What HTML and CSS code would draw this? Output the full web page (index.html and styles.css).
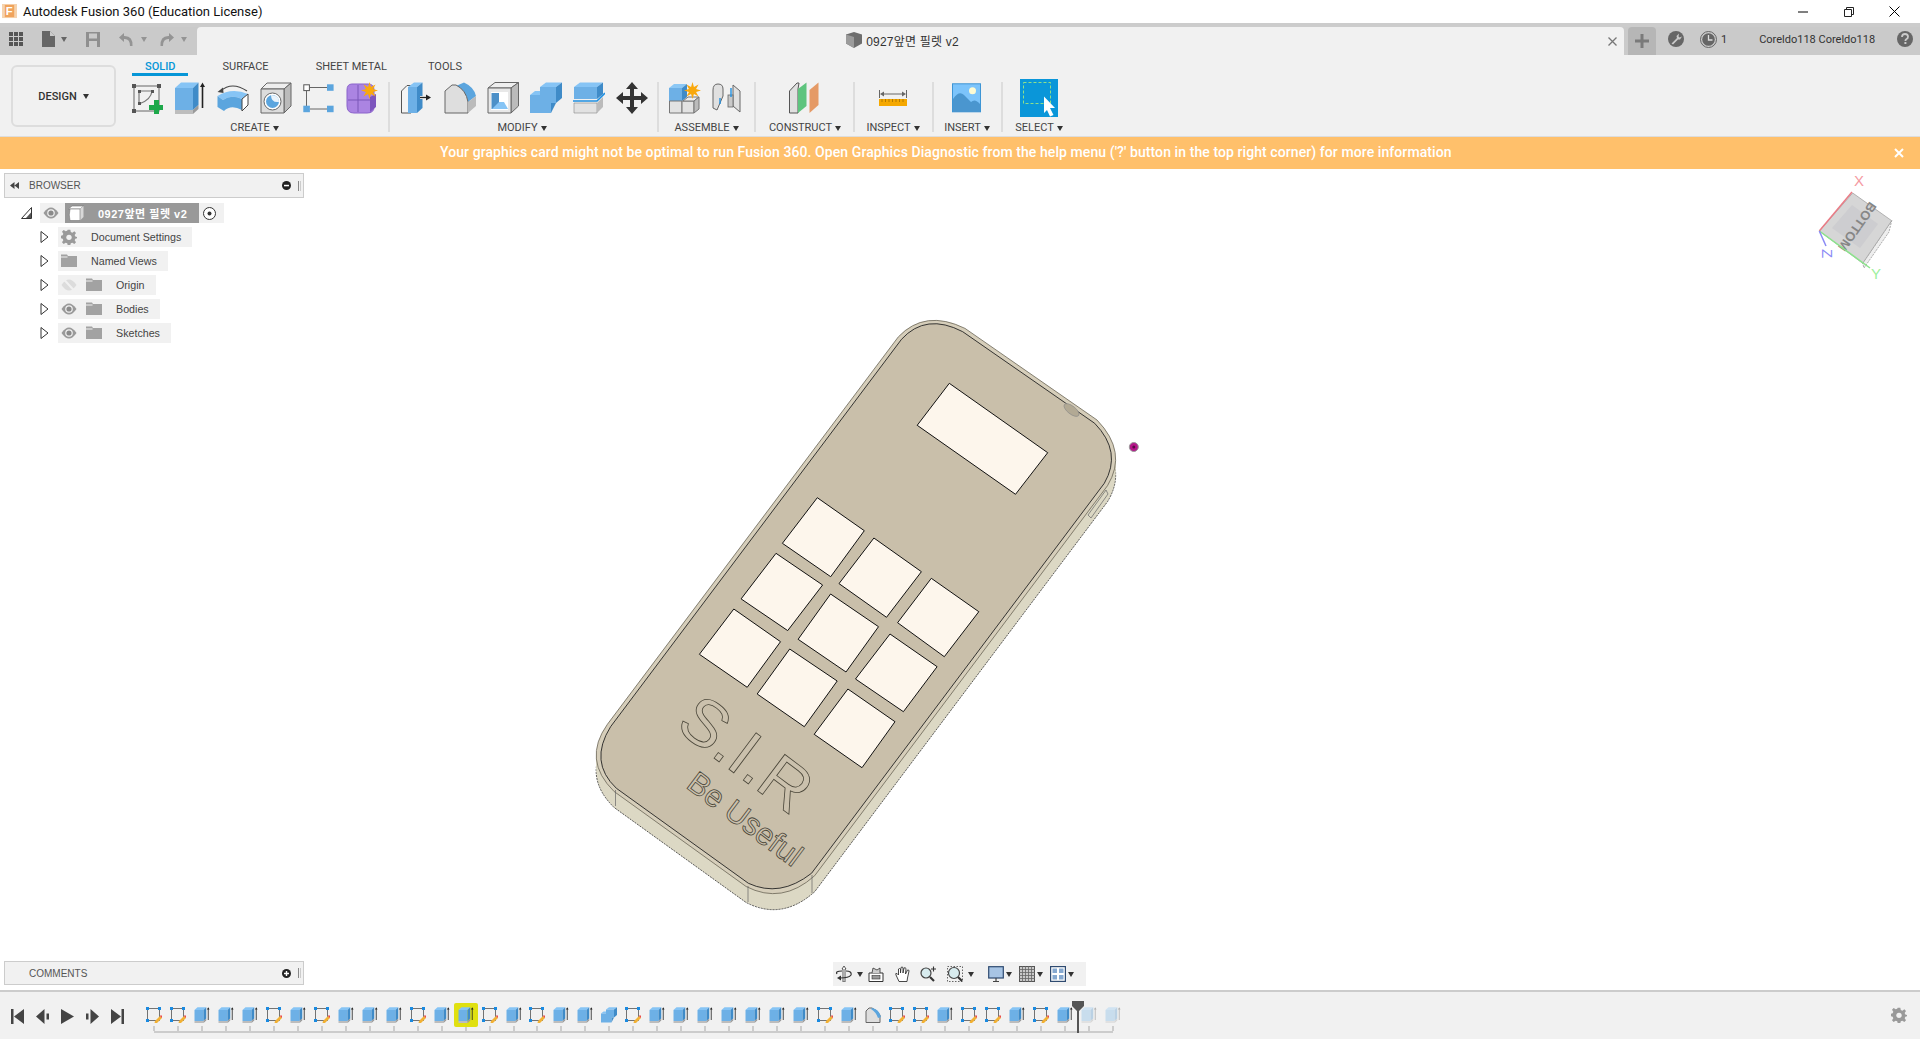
FILE: index.html
```html
<!DOCTYPE html>
<html lang="en">
<head>
<meta charset="utf-8">
<title>Autodesk Fusion 360 (Education License)</title>
<link rel="stylesheet" href="styles.css">
</head>
<body>
<svg class="defs" width="0" height="0" aria-hidden="true">
  <defs>
    <polygon id="star" points="0,-10 1.7,-4.2 7.1,-7.1 4.2,-1.7 10,0 4.2,1.7 7.1,7.1 1.7,4.2 0,10 -1.7,4.2 -7.1,7.1 -4.2,1.7 -10,0 -4.2,-1.7 -7.1,-7.1 -1.7,-4.2" fill="#f9a80c"/>
    <symbol id="i-sketch" viewBox="0 0 32 32">
      <rect x="3" y="4" width="25" height="25" fill="none" stroke="#666" stroke-width="1"/>
      <rect x="1" y="2" width="4" height="4" fill="#555"/><rect x="26" y="2" width="4" height="4" fill="#555"/><rect x="1" y="27" width="4" height="4" fill="#555"/>
      <path d="M8 9 H21 M8 9 V22 M21 9 Q20 18 8 22" fill="none" stroke="#777" stroke-width="1.2"/>
      <rect x="7" y="8" width="3" height="3" fill="#555"/><rect x="7" y="20" width="3" height="3" fill="#555"/><rect x="20" y="8" width="3" height="3" fill="#555"/>
      <path d="M23 18 H28 V23 H32 V28 H28 V32 H23 V28 H18 V23 H23Z" fill="#1da84a"/>
    </symbol>
    <symbol id="i-extrude" viewBox="0 0 32 32">
      <path d="M1 6 L7 .5 H24.5 L19 6Z" fill="#86c4f5"/>
      <path d="M1 6 H19 V28 H1Z" fill="#6db0e6"/>
      <path d="M19 6 L24.5 .5 V23 L19 28Z" fill="#3f8bc8"/>
      <path d="M1 28 H19 V32 H1Z" fill="#bdbdbd"/>
      <path d="M19 28 L24.5 23 V27 L19 32Z" fill="#9a9a9a"/>
      <path d="M28.5 26 V3" stroke="#222" stroke-width="1.6"/>
      <path d="M28.5 .5 L31 5 H26Z" fill="#222"/>
    </symbol>
    <symbol id="i-revolve" viewBox="0 0 32 32">
      <path d="M3.5 9 Q15 -1 30 9" fill="none" stroke="#444" stroke-width="1.2"/>
      <path d="M.5 10 L6 5.5 L6.5 11Z" fill="#444"/>
      <path d="M.5 14 Q15 5 31 12 L25 17 Q14 12 6 18Z" fill="#86c4f5"/>
      <path d="M.5 14 L6 18 Q14 12 25 17 V28 Q14 22 7 29 L.5 25Z" fill="#5ba5de"/>
      <path d="M25 17 L31 12 V23 L25 29Z" fill="#fff" stroke="#444"/>
    </symbol>
    <symbol id="i-hole" viewBox="0 0 32 32">
      <path d="M1 7 L7 1 H31 L24 7Z" fill="#eee" stroke="#666"/>
      <path d="M24 7 L31 1 V24 L24 31Z" fill="#bbb" stroke="#666"/>
      <path d="M1 7 H24 V31 H1Z" fill="#dcdcdc" stroke="#666"/>
      <circle cx="12.5" cy="19.5" r="8.5" fill="#fff" stroke="#666"/>
      <circle cx="12.5" cy="19.5" r="6.5" fill="#5ba5de"/>
      <path d="M11 13 Q11 21 19 20 Q19 13 11 13Z" fill="#eaf4fc"/>
    </symbol>
    <symbol id="i-pattern" viewBox="0 0 32 32">
      <path d="M7 5.5 H24 M3.5 9 V24 M7 27 H24" stroke="#666" stroke-width="1"/>
      <rect x=".8" y="2.8" width="5.6" height="5.8" fill="#fff" stroke="#555"/>
      <rect x="24" y="2.3" width="6.6" height="6.5" fill="#5ba5de"/>
      <rect x=".3" y="23.7" width="6.6" height="6.5" fill="#5ba5de"/>
      <rect x="24" y="23.7" width="6.6" height="6.5" fill="#5ba5de"/>
    </symbol>
    <symbol id="i-form" viewBox="0 0 32 32">
      <path d="M6 2 H22 Q28 2 28 8 V25 Q28 31 21 31 H8 Q1 31 1 24 V8 Q1 2 6 2Z" fill="#ab84e2" stroke="#8a62cb"/>
      <path d="M12 3 V30 M2 18 H27" stroke="#7a57b8" stroke-width="1"/>
      <path d="M24 15 L30 12 V25 L24 30Z" fill="#7d55bd"/>
      <use href="#star" transform="translate(23.5 8.5) scale(.85)"/>
    </symbol>
    <symbol id="i-press" viewBox="0 0 32 32">
      <path d="M.5 9 L6 3.5 H10 V31 H.5Z" fill="#f4f4f4" stroke="#555"/>
      <path d="M7 5 L13 .5 H21.5 L16 5Z" fill="#86c4f5"/>
      <path d="M7 5 H16 V31 H7Z" fill="#6db0e6"/>
      <path d="M16 5 L21.5 .5 V26 L16 31Z" fill="#3f8bc8"/>
      <path d="M19 15.5 H26" stroke="#fff" stroke-width="3"/>
      <path d="M19 15.5 H26" stroke="#222" stroke-width="1.4"/>
      <path d="M30 15.5 L25 12.5 V18.5Z" fill="#222"/>
    </symbol>
    <symbol id="i-fillet" viewBox="0 0 32 32">
      <path d="M12 4 L20 .5 Q30 5 32 14 L24 20 Q22 8 12 4Z" fill="#5ba5de"/>
      <path d="M1 31 V9 L8 3 H12 Q22 8 24 20 V31Z" fill="#dedede" stroke="#666"/>
      <path d="M24 20 L32 14 V24 L24 31Z" fill="#bbb"/>
    </symbol>
    <symbol id="i-shell" viewBox="0 0 32 32">
      <path d="M1 6 L8 .5 H31.5 L24 6Z" fill="#efefef" stroke="#666"/>
      <path d="M24 6 L31.5 .5 V24 L24 31Z" fill="#bbb" stroke="#666"/>
      <path d="M1 6 H24 V31 H1Z" fill="#e8e8e8" stroke="#666"/>
      <rect x="4" y="10" width="17" height="18" fill="#fff"/>
      <rect x="4.5" y="11" width="7.5" height="16" fill="#4c90c8"/>
      <path d="M12 20 H17 L21 27 H5Z" fill="#86c4f5"/>
    </symbol>
    <symbol id="i-combine" viewBox="0 0 32 32">
      <path d="M10 5 L16 .5 H32 L26 5Z" fill="#86c4f5"/>
      <path d="M10 5 H26 V21 H10Z" fill="#6db0e6"/>
      <path d="M26 5 L32 .5 V16 L26 21Z" fill="#3f8bc8"/>
      <path d="M0 13 L5 9 H10 V13Z" fill="#86c4f5"/>
      <path d="M0 13 H21 V31 H0Z" fill="#6db0e6"/>
      <path d="M21 21 H26 L21 31Z" fill="#3f8bc8"/>
    </symbol>
    <symbol id="i-offset" viewBox="0 0 32 32">
      <path d="M1 5 L7 .5 H30 L24 5Z" fill="#86c4f5"/>
      <path d="M1 5 H24 V17 H1Z" fill="#6db0e6"/>
      <path d="M24 5 L30 .5 V12 L24 17Z" fill="#3f8bc8"/>
      <path d="M-1 19 H24 L32 11" fill="none" stroke="#1f8fe0" stroke-width="1.6"/>
      <path d="M1 21 H24 V31 H1Z" fill="#e2e2e2" stroke="#888" stroke-width=".6"/>
      <path d="M24 21 L30 15 V25 L24 31Z" fill="#bbb"/>
    </symbol>
    <symbol id="i-move" viewBox="0 0 32 32">
      <path d="M16 0 L22 7 H18 V14 H25 V10 L32 16 L25 22 V18 H18 V25 H22 L16 32 L10 25 H14 V18 H7 V22 L0 16 L7 10 V14 H14 V7 H10Z" fill="#333"/>
    </symbol>
    <symbol id="i-newcomp" viewBox="0 0 32 32">
      <path d="M0 6 L5 2 H18 L13 6Z" fill="#8cc8f5"/>
      <path d="M0 6 H13 V19 H0Z" fill="#6db0e6"/>
      <path d="M13 6 L18 2 V15 L13 19Z" fill="#3f8bc8"/>
      <path d="M.5 19 H13 V31 H.5Z" fill="#e2e2e2" stroke="#777"/>
      <path d="M13 19 H25 V31 H13Z" fill="#e2e2e2" stroke="#777"/>
      <path d="M14 19 L19 15 H30 L25 19Z" fill="#eee" stroke="#777"/>
      <path d="M25 19 L30 15 V27 L25 31Z" fill="#bbb" stroke="#777"/>
      <use href="#star" transform="translate(23.5 8.5) scale(.85)"/>
    </symbol>
    <symbol id="i-joint" viewBox="0 0 32 32">
      <path d="M1 8 Q1 2 6 2 Q11 2 11 7 V14 L5 28 L1 26Z" fill="#e0e0e0" stroke="#666"/>
      <path d="M21 3 L28 9 V30 L21 24Z" fill="#e0e0e0" stroke="#666"/>
      <rect x="16" y="13" width="5" height="12" fill="#c9c9c9" stroke="#666" stroke-width=".8"/>
      <path d="M19 6 V15" stroke="#1f8fe0" stroke-width="1.4"/>
      <path d="M8 16 V22" stroke="#1f8fe0" stroke-width="1.4"/>
    </symbol>
    <symbol id="i-construct" viewBox="0 0 32 32">
      <path d="M.5 9 L8 1 H10 L9 7 V31 H.5Z" fill="#e0e0e0" stroke="#555"/>
      <path d="M9 7 L17.5 .5 V24 L9 31Z" fill="#5ec47e"/>
      <path d="M20.5 31 V8 L29.5 .5 V23Z" fill="#e59a66"/>
    </symbol>
    <symbol id="i-inspect" viewBox="0 0 32 32">
      <path d="M2.5 8 V16 M29.5 8 V16" stroke="#666" stroke-width="1"/>
      <path d="M6 12 H26" stroke="#666" stroke-width="1"/>
      <path d="M3 12 L7 9.5 V14.5Z M29 12 L25 9.5 V14.5Z" fill="#666"/>
      <rect x="2" y="17" width="28" height="7" fill="#f5a800"/>
      <path d="M5 17 V20 M8.500 17 V20 M12 17 V20 M15.500 17 V20 M19 17 V20 M22.500 17 V20 M26 17 V20" stroke="#a36f00" stroke-width=".8"/>
    </symbol>
    <symbol id="i-insert" viewBox="0 0 32 32">
      <rect x="1.500" y="1.800" width="28" height="28" fill="#7cc4fb" stroke="#3d95d5"/>
      <path d="M2 30 V17 Q8 8 13 13 Q17 17 20 20 Q24 16 29 22 V30Z" fill="#4a96cf"/>
      <circle cx="21.500" cy="8.700" r="3.500" fill="#fdfbd4"/>
    </symbol>
    <symbol id="i-select" viewBox="0 0 38 38">
      <rect width="38" height="38" fill="#0a96d9"/>
      <rect x="3.500" y="3.500" width="27" height="21" fill="none" stroke="#8fe08a" stroke-dasharray="3 2"/>
      <path d="M24 17.500 L35 29 H30 L33.500 36 L30 37.500 L27 31 L24 34Z" fill="#fff"/>
    </symbol>
    <symbol id="i-tlsketch" viewBox="0 0 16 16">
      <rect x="1.500" y="1.500" width="12" height="12" fill="none" stroke="#666" stroke-width=".9"/>
      <path d="M0 0 H3 V3 H0Z M12 0 H15 V3 H12Z M0 12 H3 V15 H0Z" fill="#1a8ae0"/>
      <path d="M9 14 L14 9 L16 11 L11 16 L8.500 16Z" fill="#f2b134"/>
      <path d="M14 9 L15 8 L16.500 9.500 L15.500 11Z" fill="#ea4b4b"/>
    </symbol>
    <symbol id="i-tlfillet" viewBox="0 0 16 16">
      <path d="M1 15.500 V4 L4 1 H7 Q12 3 15 8 V15.500Z" fill="#dedede" stroke="#666"/>
      <path d="M7 1 Q14 2 16 10 L13 11 Q11 5 6 2Z" fill="#5ba5de"/>
    </symbol>
    <symbol id="i-gear" viewBox="0 0 24 24">
      <path d="M10 1 H14 L14.700 4.500 L17 5.500 L20 3.500 L22.500 6 L20.500 9 L21.500 11.300 L24 12 V14 L21.500 14.700 L20.500 17 L22.500 20 L20 22.500 L17 20.500 L14.700 21.500 L14 24 H10 L9.300 21.500 L7 20.500 L4 22.500 L1.500 20 L3.500 17 L2.500 14.700 L0 14 V10 L2.500 9.300 L3.500 7 L1.500 4 L4 1.500 L7 3.500 L9.300 2.500Z" fill="currentColor"/>
      <circle cx="12" cy="12.500" r="4" fill="#f1f1f1"/>
    </symbol>
    <symbol id="i-eye" viewBox="0 0 16 16">
      <path d="M.5 8 Q8 -3 15.500 8 Q8 19 .5 8Z" fill="#9a9a9a"/>
      <circle cx="8" cy="8" r="3.800" fill="#f1f1f1"/>
      <circle cx="8" cy="8" r="2.600" fill="#8a8a8a"/>
    </symbol>
    <symbol id="i-folder" viewBox="0 0 16 16">
      <path d="M0 1.500 H6 L7 3 H16 V14 H0Z" fill="#a2a2a2"/>
      <path d="M0 3.500 H6.500 V4.500 H0Z" fill="#f1f1f1"/>
    </symbol>
    <symbol id="i-arrow" viewBox="0 0 9 12">
      <path d="M1 .5 L8 6 L1 11.500Z" fill="#fff" stroke="#333" stroke-width="1"/>
    </symbol>
  </defs>
</svg>

<header class="titlebar">
  <svg class="app-icon" viewBox="0 0 16 16"><rect width="16" height="15" fill="#f6d3ae"/><rect x="3" y="1" width="10" height="13" fill="#f0a35c"/><text x="4" y="12" class="app-f">F</text></svg>
  <span class="app-title">Autodesk Fusion 360 (Education License)</span>
  <div class="win-controls">
    <svg class="win-min" viewBox="0 0 10 10"><path d="M0 5 H10" stroke="#000" stroke-width="1"/></svg>
    <svg class="win-max" viewBox="0 0 10 10"><path d="M.5 2.500 H7.500 V9.500 H.5Z M2.500 2.500 V.5 H9.500 V7.500 H7.500" fill="none" stroke="#222"/></svg>
    <svg class="win-close" viewBox="0 0 11 11"><path d="M.5 .5 L10.500 10.500 M10.500 .5 L.5 10.500" stroke="#000"/></svg>
  </div>
</header>
<div class="strip"></div>

<div class="tabrow">
  <div class="quick">
    <svg class="q-grid" viewBox="0 0 14 14"><path d="M0 0h4v4H0zM5 0h4v4H5zM10 0h4v4h-4zM0 5h4v4H0zM5 5h4v4H5zM10 5h4v4h-4zM0 10h4v4H0zM5 10h4v4H5zM10 10h4v4h-4z" fill="#555"/></svg>
    <svg class="q-file" viewBox="0 0 13 16"><path d="M0 0 H8 L13 5 V16 H0Z" fill="#666"/><path d="M8 0 V5 H13Z" fill="#ccc"/></svg>
    <span class="caret q-c1"></span>
    <svg class="q-save" viewBox="0 0 14 15"><path d="M0 0 H14 V15 H0Z" fill="#8f8f8f"/><rect x="3" y="1.500" width="8" height="5" fill="#cacaca"/><rect x="3" y="9" width="8" height="6" fill="#cacaca"/></svg>
    <svg class="q-undo" viewBox="0 0 14 14"><path d="M5 1 L0 5.500 L5 10 V7 Q11 6.500 11 14 H13.500 Q14 3.500 5 4Z" fill="#949494"/></svg>
    <span class="caret caret-light q-c2"></span>
    <svg class="q-redo" viewBox="0 0 14 14"><path d="M9 1 L14 5.500 L9 10 V7 Q3 6.500 3 14 H.5 Q0 3.500 9 4Z" fill="#949494"/></svg>
    <span class="caret caret-light q-c3"></span>
  </div>
  <div class="doc-tab">
    <div class="doc-title">
      <svg class="doc-cube" viewBox="0 0 16 16"><path d="M8 0 L16 2.500 V11.500 L8 16 L0 11.500 V2.500Z" fill="#6e6e6e"/><path d="M0 2.500 L8 5 V16 L0 11.500Z" fill="#9b9b9b"/></svg>
      <span>0927앞면 필렛 v2</span>
    </div>
    <svg class="doc-close" viewBox="0 0 9 9"><path d="M.5 .5 L8.500 8.500 M8.500 .5 L.5 8.500" stroke="#777" stroke-width="1.300"/></svg>
  </div>
  <div class="account">
    <div class="new-tab"><svg viewBox="0 0 14 14"><path d="M5.500 0 H8.500 V5.500 H14 V8.500 H8.500 V14 H5.500 V8.500 H0 V5.500 H5.500Z" fill="#7a7a7a"/></svg></div>
    <svg class="ac-wrench" viewBox="0 0 16 16"><circle cx="8" cy="8" r="8" fill="#666"/><path d="M11 2.500 L8.500 5 L9 7 L3.500 12.500 L5 13.500 L10 8.500 L12 8.500 L14 5.500 L11.500 6.500 L10.500 5.500Z" fill="#cacaca"/></svg>
    <svg class="ac-clock" viewBox="0 0 17 17"><circle cx="8.500" cy="8.500" r="8" fill="#cacaca" stroke="#666"/><circle cx="8.500" cy="8.500" r="6.300" fill="#666"/><path d="M8.500 4 V9 H12.500" fill="none" stroke="#ddd" stroke-width="1.300"/></svg>
    <span class="ac-count">1</span>
    <span class="ac-user">Coreldo118 Coreldo118</span>
    <svg class="ac-help" viewBox="0 0 16 16"><circle cx="8" cy="8" r="8" fill="#666"/><path d="M5 6 Q5 3 8 3 Q11 3 11 5.700 Q11 7.300 9.300 8.200 Q8.400 8.800 8.400 10" fill="none" stroke="#cacaca" stroke-width="1.800"/><rect x="7.400" y="11" width="2" height="2" fill="#cacaca"/></svg>
  </div>
</div>

<div class="toolbar">
  <button class="design">DESIGN<span class="caret caret-dark"></span></button>
  <div class="tools">
    <nav class="tabs">
      <span class="tab tab-active">SOLID</span>
      <span class="tab">SURFACE</span>
      <span class="tab">SHEET METAL</span>
      <span class="tab tab-last">TOOLS</span>
    </nav>
    <div class="groups">
      <section class="group g-create">
        <div class="icons"><svg class="ti"><use href="#i-sketch"/></svg><svg class="ti"><use href="#i-extrude"/></svg><svg class="ti"><use href="#i-revolve"/></svg><svg class="ti"><use href="#i-hole"/></svg><svg class="ti"><use href="#i-pattern"/></svg><svg class="ti"><use href="#i-form"/></svg></div>
        <div class="label">CREATE<span class="caret caret-dark"></span></div>
      </section>
      <div class="sep"></div>
      <section class="group g-modify">
        <div class="icons"><svg class="ti"><use href="#i-press"/></svg><svg class="ti"><use href="#i-fillet"/></svg><svg class="ti"><use href="#i-shell"/></svg><svg class="ti"><use href="#i-combine"/></svg><svg class="ti"><use href="#i-offset"/></svg><svg class="ti"><use href="#i-move"/></svg></div>
        <div class="label label-modify">MODIFY<span class="caret caret-dark"></span></div>
      </section>
      <div class="sep"></div>
      <section class="group g-assemble">
        <div class="icons"><svg class="ti"><use href="#i-newcomp"/></svg><svg class="ti"><use href="#i-joint"/></svg></div>
        <div class="label">ASSEMBLE<span class="caret caret-dark"></span></div>
      </section>
      <div class="sep"></div>
      <section class="group g-construct">
        <div class="icons"><svg class="ti"><use href="#i-construct"/></svg></div>
        <div class="label">CONSTRUCT<span class="caret caret-dark"></span></div>
      </section>
      <div class="sep"></div>
      <section class="group g-inspect">
        <div class="icons"><svg class="ti"><use href="#i-inspect"/></svg></div>
        <div class="label">INSPECT<span class="caret caret-dark"></span></div>
      </section>
      <div class="sep"></div>
      <section class="group g-insert">
        <div class="icons"><svg class="ti"><use href="#i-insert"/></svg></div>
        <div class="label">INSERT<span class="caret caret-dark"></span></div>
      </section>
      <div class="sep"></div>
      <section class="group g-select">
        <div class="icons"><svg class="ti-select"><use href="#i-select"/></svg></div>
        <div class="label">SELECT<span class="caret caret-dark"></span></div>
      </section>
    </div>
  </div>
</div>

<div class="banner">
  <span class="banner-text">Your graphics card might not be optimal to run Fusion 360. Open Graphics Diagnostic from the help menu ('?' button in the top right corner) for more information</span>
  <svg class="banner-close" viewBox="0 0 10 10"><path d="M1 1 L9 9 M9 1 L1 9" stroke="#fff" stroke-width="2"/></svg>
</div>

<main class="viewport">
  <svg class="scene" viewBox="0 169 1920 821" width="1920" height="821">
    <defs>
      <path id="rim" d="M607.400 724.300 L898.300 336.900 Q925 308.800 965 328.400 L1097 420 Q1128 452 1107.500 485.700 L814.700 875.700 Q782 905 746.100 886.500 L614.100 791.500 Q582 760 607.400 724.300Z"/>
    </defs>
    <use href="#rim" transform="translate(0 16)" class="m-side-edge"/>
    <use href="#rim" transform="translate(0 12)" class="m-side"/>
    <use href="#rim" transform="translate(0 8)" class="m-side"/>
    <use href="#rim" transform="translate(0 4)" class="m-side"/>
    <use href="#rim" class="m-rim"/>
    <path class="m-face" d="M610.600 726.700 L901.500 339.300 Q926 312.500 962.700 331.700 L1094.700 423.300 Q1122.500 452 1104.300 483.300 L811.500 873.300 Q780 898 748.400 883.300 L616.400 788.300 Q588.500 762 610.600 726.700Z"/>
    <path class="m-line" d="M615.500 790 V806 M748 886 V902 M812 875 V893"/>
    <ellipse class="m-detail" cx="1071.500" cy="410" rx="9" ry="4" transform="rotate(38 1071.500 410)"/>
    <path class="m-line" d="M1088 515 L1106 490 L1108 494 L1091 518Z"/>
    <g class="m-holes">
      <polygon points="949.300,383.300 1047.700,452.700 1015.500,494.300 917.200,425.300"/>
      <polygon points="817.300,497.700 864.300,530.700 830.700,576.700 782.400,543.300"/>
      <polygon points="873.900,538 921.400,571.700 886.500,617.300 839,583.600"/>
      <polygon points="931.300,578.300 978.800,611.700 944.300,656.700 897.600,622.700"/>
      <polygon points="776,553.300 822.600,585 787.700,630.600 741.100,598.900"/>
      <polygon points="830.600,594 878.500,626.700 846,672 798.100,639.300"/>
      <polygon points="890,634 937.100,666.700 903.400,711.700 855.500,679"/>
      <polygon points="733.800,609 780.500,641.700 747.200,687.300 699.400,654.300"/>
      <polygon points="789.700,649 837.200,681 804.300,726.700 757.200,694"/>
      <polygon points="847.900,689 895,721.700 862,767.700 814.200,734.300"/>
    </g>
    <text class="m-text m-sir" transform="matrix(.8 .6 -.6 .8 674 728)">S.I.R</text>
    <text class="m-text m-be" transform="matrix(.8 .6 -.6 .8 685 787)">Be Useful</text>
    <circle class="m-dot" cx="1133.800" cy="447" r="4.500"/>
    <circle class="m-dot-in" cx="1133.800" cy="447" r="1.500"/>
    <g class="cube">
      <path class="cube-side" d="M1862.700 263.300 L1891.700 220.700 L1889 232 L1864 268Z"/>
      <path class="cube-face" d="M1819.300 231 L1852.700 193 L1891.700 220.700 L1862.700 263.300Z"/>
      <path class="cube-inner" d="M1832 228 L1852 205 L1878 224 L1860 248Z"/>
      <text class="cube-label" transform="translate(1856.500 226) rotate(125)">BOTTOM</text>
      <path class="ax-x" d="M1819.300 231 L1852 192"/>
      <path class="ax-y" d="M1819.300 231 L1870 268"/>
      <path class="ax-z" d="M1819.300 231 L1826 246"/>
      <text class="ax-lx" x="1854" y="186">X</text>
      <text class="ax-ly" x="1871" y="279">Y</text>
      <text class="ax-lz" transform="translate(1822 249) rotate(90)">Z</text>
    </g>
  </svg>

  <aside class="browser">
    <div class="panel-head">
      <svg class="rew" viewBox="0 0 9 7"><path d="M4.500 0 V7 L0 3.500Z M9 0 V7 L4.500 3.500Z" fill="#444"/></svg>
      <span class="panel-title">BROWSER</span>
      <svg class="panel-btn" viewBox="0 0 9 9"><circle cx="4.500" cy="4.500" r="4.500" fill="#222"/><rect x="2" y="3.800" width="5" height="1.500" fill="#fff"/></svg>
      <span class="panel-grip"></span>
    </div>
    <div class="tree">
      <div class="row row-root">
        <svg class="root-tri" viewBox="0 0 11 12"><path d="M.5 11.500 L10.500 .5 V11.500Z" fill="#fff" stroke="#333"/><path d="M5 11 L10 5.500 V11Z" fill="#555"/></svg>
        <div class="pill pill-root">
          <svg class="ico"><use href="#i-eye"/></svg>
          <div class="root-name">
            <svg class="root-cube" viewBox="0 0 16 16"><path d="M.5 4 L4 1 H15.500 L12 4Z" fill="#fff" stroke="#777" stroke-width=".6"/><path d="M12 4 L15.500 1 V12 L12 15.500Z" fill="#d8d8d8"/><path d="M2 4 H12 V15.500 H2 Q.5 10 2 4Z" fill="#fff" stroke="#777" stroke-width=".6"/></svg>
            <span>0927앞면 필렛 v2</span>
          </div>
          <svg class="root-radio" viewBox="0 0 13 13"><circle cx="6.500" cy="6.500" r="6" fill="#fff" stroke="#333"/><circle cx="6.500" cy="6.500" r="2" fill="#333"/></svg>
        </div>
      </div>
      <div class="row"><svg class="arrow"><use href="#i-arrow"/></svg><div class="pill"><svg class="ico gear"><use href="#i-gear"/></svg><span class="pill-text">Document Settings</span></div></div>
      <div class="row"><svg class="arrow"><use href="#i-arrow"/></svg><div class="pill"><svg class="ico"><use href="#i-folder"/></svg><span class="pill-text">Named Views</span></div></div>
      <div class="row"><svg class="arrow"><use href="#i-arrow"/></svg><div class="pill"><svg class="ico eye-off" viewBox="0 0 16 16"><path d="M.5 8 Q8 -3 15.500 8 Q8 19 .5 8Z" fill="#dcdcdc"/><path d="M2 1.500 L14 14.500" stroke="#f1f1f1" stroke-width="2"/></svg><svg class="ico ico-2"><use href="#i-folder"/></svg><span class="pill-text">Origin</span></div></div>
      <div class="row"><svg class="arrow"><use href="#i-arrow"/></svg><div class="pill"><svg class="ico"><use href="#i-eye"/></svg><svg class="ico ico-2"><use href="#i-folder"/></svg><span class="pill-text">Bodies</span></div></div>
      <div class="row"><svg class="arrow"><use href="#i-arrow"/></svg><div class="pill"><svg class="ico"><use href="#i-eye"/></svg><svg class="ico ico-2"><use href="#i-folder"/></svg><span class="pill-text">Sketches</span></div></div>
    </div>
  </aside>

  <aside class="comments">
    <span class="panel-title comments-title">COMMENTS</span>
    <svg class="panel-btn" viewBox="0 0 9 9"><circle cx="4.500" cy="4.500" r="4.500" fill="#222"/><path d="M2 3.800 H3.800 V2 H5.200 V3.800 H7 V5.200 H5.200 V7 H3.800 V5.200 H2Z" fill="#fff"/></svg>
    <span class="panel-grip"></span>
  </aside>

  <div class="navbar">
    <svg class="nb" viewBox="0 0 16 16"><path d="M8 0 L10 3 H9 V16 H7 V3 H6Z" fill="#fff" stroke="#333" stroke-width=".8"/><path d="M1 8 Q-1 5 6 5 M10 5 Q16 5 15 9 Q13 12 4 12" fill="none" stroke="#333" stroke-width="1.200"/><path d="M1 12 L5 9.500 V14.500Z" fill="#333"/></svg>
    <span class="caret caret-dark nb-c"></span>
    <svg class="nb ml-5" viewBox="0 0 16 16"><path d="M1 7 H15 V15.500 H1Z" fill="#fff" stroke="#333"/><rect x="4" y="9.500" width="8" height="3.500" fill="#999" stroke="#333" stroke-width=".6"/><path d="M4 7 L5 2 L9 4 L12 2 L12 7" fill="#ccc" stroke="#333" stroke-width=".8"/></svg>
    <svg class="nb ml-11" viewBox="0 0 16 16"><path d="M4 15.500 L1 9 Q0 7 2 7.500 L3.500 9 V3 Q4.500 2 5.500 3 V7 L6 1.500 Q7 .5 8 1.500 V7 L9 2 Q10 1 11 2.500 L10.500 8 L12.500 4 Q14 3.500 14 5 L12.500 12 L12 15.500Z" fill="#fff" stroke="#333" stroke-width=".9"/></svg>
    <svg class="nb ml-9" viewBox="0 0 16 16"><circle cx="6" cy="7" r="5" fill="#d8ecef" stroke="#444" stroke-width="1.200"/><path d="M10 11 L14 15" stroke="#333" stroke-width="2.200"/><path d="M11 3 H16 M13.500 .5 V5.500" stroke="#333" stroke-width="1.100"/></svg>
    <svg class="nb ml-11" viewBox="0 0 16 16"><rect x=".5" y=".5" width="15" height="15" fill="none" stroke="#666" stroke-dasharray="1.500 1.500"/><circle cx="7" cy="7" r="5.500" fill="#d8ecef" stroke="#444" stroke-width="1.200"/><path d="M11 11 L15 15" stroke="#333" stroke-width="2.200"/></svg>
    <span class="caret caret-dark ml-5"></span>
    <svg class="nb ml-14" viewBox="0 0 16 16"><rect x=".7" y=".7" width="14.600" height="11.300" fill="#a7c4e4" stroke="#2e4a70" stroke-width="1.200"/><path d="M5 15.500 H11 M8 12 V15" stroke="#444" stroke-width="1.200"/></svg>
    <span class="caret caret-dark ml-2"></span>
    <svg class="nb ml-7" viewBox="0 0 16 16"><rect x=".5" y=".5" width="15" height="15" fill="#c9c9c9" stroke="#555"/><path d="M3.500 0 V16 M6.500 0 V16 M9.500 0 V16 M12.500 0 V16 M0 3.500 H16 M0 6.500 H16 M0 9.500 H16 M0 12.500 H16" stroke="#666" stroke-width=".8"/></svg>
    <span class="caret caret-dark ml-2"></span>
    <svg class="nb ml-7" viewBox="0 0 16 16"><rect x=".6" y=".6" width="14.800" height="14.800" fill="#fff" stroke="#2e4a70" stroke-width="1.200"/><path d="M2.500 2.500 H7 V7 H2.500Z M9 2.500 H13.500 V7 H9Z M2.500 9 H7 V13.500 H2.500Z M9 9 H13.500 V13.500 H9Z" fill="#86a9d0"/></svg>
    <span class="caret caret-dark ml-2"></span>
  </div>
</main>

<footer class="timeline">
  <div class="tl-controls">
    <svg class="tc" viewBox="0 0 13 15"><path d="M0 0 H2.500 V15 H0Z M13 0 V15 L3 7.500Z" fill="#444"/></svg>
    <svg class="tc" viewBox="0 0 13 15"><path d="M8.500 0 V15 L0 7.500Z M10.500 4.500 H13 V10.500 H10.500Z" fill="#444"/></svg>
    <svg class="tc" viewBox="0 0 13 15"><path d="M0 0 L13 7.500 L0 15Z" fill="#444"/></svg>
    <svg class="tc" viewBox="0 0 13 15"><path d="M4.500 0 V15 L13 7.500Z M0 4.500 H2.500 V10.500 H0Z" fill="#444"/></svg>
    <svg class="tc" viewBox="0 0 13 15"><path d="M13 0 H10.500 V15 H13Z M0 0 V15 L10 7.500Z" fill="#444"/></svg>
  </div>
  <div class="track">
    <div class="tl-items">
      <div class="tl"><svg><use href="#i-tlsketch"/></svg></div>
      <div class="tl"><svg><use href="#i-tlsketch"/></svg></div>
      <div class="tl"><svg><use href="#i-extrude"/></svg></div>
      <div class="tl"><svg><use href="#i-extrude"/></svg></div>
      <div class="tl"><svg><use href="#i-extrude"/></svg></div>
      <div class="tl"><svg><use href="#i-tlsketch"/></svg></div>
      <div class="tl"><svg><use href="#i-extrude"/></svg></div>
      <div class="tl"><svg><use href="#i-tlsketch"/></svg></div>
      <div class="tl"><svg><use href="#i-extrude"/></svg></div>
      <div class="tl"><svg><use href="#i-extrude"/></svg></div>
      <div class="tl"><svg><use href="#i-extrude"/></svg></div>
      <div class="tl"><svg><use href="#i-tlsketch"/></svg></div>
      <div class="tl"><svg><use href="#i-extrude"/></svg></div>
      <div class="tl tl-hi"><svg><use href="#i-extrude"/></svg></div>
      <div class="tl"><svg><use href="#i-tlsketch"/></svg></div>
      <div class="tl"><svg><use href="#i-extrude"/></svg></div>
      <div class="tl"><svg><use href="#i-tlsketch"/></svg></div>
      <div class="tl"><svg><use href="#i-extrude"/></svg></div>
      <div class="tl"><svg><use href="#i-extrude"/></svg></div>
      <div class="tl"><svg><use href="#i-combine"/></svg></div>
      <div class="tl"><svg><use href="#i-tlsketch"/></svg></div>
      <div class="tl"><svg><use href="#i-extrude"/></svg></div>
      <div class="tl"><svg><use href="#i-extrude"/></svg></div>
      <div class="tl"><svg><use href="#i-extrude"/></svg></div>
      <div class="tl"><svg><use href="#i-extrude"/></svg></div>
      <div class="tl"><svg><use href="#i-extrude"/></svg></div>
      <div class="tl"><svg><use href="#i-extrude"/></svg></div>
      <div class="tl"><svg><use href="#i-extrude"/></svg></div>
      <div class="tl"><svg><use href="#i-tlsketch"/></svg></div>
      <div class="tl"><svg><use href="#i-extrude"/></svg></div>
      <div class="tl"><svg><use href="#i-tlfillet"/></svg></div>
      <div class="tl"><svg><use href="#i-tlsketch"/></svg></div>
      <div class="tl"><svg><use href="#i-tlsketch"/></svg></div>
      <div class="tl"><svg><use href="#i-extrude"/></svg></div>
      <div class="tl"><svg><use href="#i-tlsketch"/></svg></div>
      <div class="tl"><svg><use href="#i-tlsketch"/></svg></div>
      <div class="tl"><svg><use href="#i-extrude"/></svg></div>
      <div class="tl"><svg><use href="#i-tlsketch"/></svg></div>
      <div class="tl"><svg><use href="#i-extrude"/></svg></div>
      <div class="tl tl-ghost"><svg><use href="#i-extrude"/></svg></div>
      <div class="tl tl-ghost"><svg><use href="#i-extrude"/></svg></div>
    </div>
    <div class="tl-line"></div>
    <svg class="tl-marker" viewBox="0 0 12 32"><path d="M0 0 H12 V5 L7 10 V32 H5 V10 L0 5Z" fill="#555"/></svg>
  </div>
  <svg class="tl-gear"><use href="#i-gear"/></svg>
</footer>
</body>
</html>
```
FILE: styles.css
```css
* { box-sizing: border-box; }
html, body { margin: 0; padding: 0; }
body {
  width: 1920px;
  height: 1039px;
  overflow: hidden;
  display: flex;
  flex-direction: column;
  background: #fff;
  color: #333;
  font-family: "Liberation Sans", "Noto Sans CJK KR", sans-serif;
}
svg { display: block; flex: none; }
.defs { position: absolute; }

.caret {
  display: inline-block;
  width: 0;
  height: 0;
  flex: none;
  border-left: 3.5px solid transparent;
  border-right: 3.5px solid transparent;
  border-top: 5px solid #666;
}
.caret-light { border-top-color: #949494; }
.caret-dark { border-top-color: #333; }

/* title bar */
.titlebar { height: 23px; flex: none; display: flex; align-items: center; background: #fff; padding-left: 2px; }
.app-icon { width: 15px; height: 15px; }
.app-f { font: bold 12px "Liberation Sans", sans-serif; fill: #fff; }
.app-title { margin-left: 6px; font: 13px/23px Roboto, sans-serif; color: #111; }
.win-controls { margin-left: auto; display: flex; align-items: center; }
.win-min { width: 10px; height: 10px; }
.win-max { width: 10px; height: 10px; margin-left: 36px; }
.win-close { width: 11px; height: 11px; margin-left: 35px; margin-right: 20px; }
.strip { height: 4px; flex: none; background: #ccc; }

/* tab row */
.tabrow { height: 28px; flex: none; display: flex; background: #cacaca; }
.quick { width: 197px; flex: none; display: flex; align-items: center; }
.q-grid { width: 14px; height: 14px; margin-left: 9px; margin-top: -4px; }
.q-file { width: 13px; height: 16px; margin-left: 19px; margin-top: -4px; }
.q-c1 { margin-left: 6px; margin-top: -4px; }
.q-save { width: 14px; height: 15px; margin-left: 19px; margin-top: -4px; }
.q-undo { width: 14px; height: 14px; margin-left: 19px; margin-top: -4px; }
.q-c2 { margin-left: 8px; margin-top: -4px; }
.q-redo { width: 14px; height: 14px; margin-left: 13px; margin-top: -4px; }
.q-c3 { margin-left: 7px; margin-top: -4px; }
.doc-tab {
  flex: 1;
  display: flex;
  align-items: center;
  padding-right: 7px;
  background: #f1f1f1;
  border-radius: 4px 4px 0 0;
}
.doc-title { display: flex; align-items: center; gap: 4px; margin: -2px auto 0; font-size: 12px; letter-spacing: .2px; color: #333; }
.doc-cube { width: 16px; height: 16px; }
.doc-close { width: 9px; height: 9px; }
.account { width: 296px; flex: none; display: flex; align-items: center; font: 11px Roboto, sans-serif; color: #333; }
.new-tab {
  width: 28px;
  height: 28px;
  margin-left: 4px;
  display: flex;
  align-items: center;
  justify-content: center;
  background: #b6b6b6;
  border-radius: 4px 4px 0 0;
}
.new-tab svg { width: 14px; height: 14px; }
.ac-wrench { width: 16px; height: 16px; margin: -4px 0 0 12px; }
.ac-clock { width: 17px; height: 17px; margin: -4px 0 0 16px; }
.ac-count { margin: -4px 0 0 4px; }
.ac-user { margin: -4px 0 0 32px; width: 111px; white-space: nowrap; }
.ac-help { width: 16px; height: 16px; margin: -4px 0 0 27px; }

/* toolbar */
.toolbar { height: 82px; flex: none; display: flex; background: #f1f1f1; border-bottom: 1px solid #ddd; }
.design {
  width: 105px;
  height: 62px;
  margin: 10px 0 0 11px;
  display: flex;
  align-items: center;
  justify-content: center;
  gap: 6px;
  padding: 0;
  background: #f1f1f1;
  border: 2px solid #ddd;
  border-radius: 6px;
  font: 500 11px Roboto, sans-serif;
  color: #333;
}
.tools { flex: 1; display: flex; flex-direction: column; }
.tabs { height: 21px; display: flex; gap: 21px; margin-left: 16px; }
.tab {
  height: 21px;
  padding: 6px 13px 0;
  font: 11px/12px Roboto, sans-serif;
  color: #444;
}
.tab-active { color: #0696d7; font-weight: 500; border-bottom: 3px solid #0696d7; }
.tab-last { margin-left: -6px; }
.groups { display: flex; margin-top: 3px; }
.group { height: 53px; display: flex; flex-direction: column; align-items: center; flex: none; }
.g-create { width: 272px; padding: 0 10px 0 15px; }
.g-modify { width: 267px; padding: 0 9px 0 11px; }
.g-assemble { width: 95px; padding: 0 10px; }
.g-construct { width: 97px; padding: 0 32px 0 33px; }
.g-inspect { width: 77px; padding: 0 23px 0 22px; }
.g-insert { width: 67px; padding: 0 18px 0 17px; }
.g-select { width: 72px; padding: 0 17px; }
.icons { height: 38px; display: flex; align-items: center; gap: 11px; flex: none; }
.ti { width: 32px; height: 32px; }
.ti-select { width: 38px; height: 38px; }
.label {
  flex: none;
  display: flex;
  align-items: center;
  gap: 3px;
  height: 20px;
  margin-top: 1px;
  white-space: nowrap;
  font: 11px/20px Roboto, sans-serif;
  color: #444;
}
.label-modify { margin-right: 5px; }
.sep { width: 2px; height: 50px; margin-top: 3px; flex: none; background: #ddd; }

/* banner */
.banner { height: 32px; flex: none; display: flex; align-items: center; background: #ffc06b; }
.banner-text { margin: -2px 0 0 440px; font: 500 14px Roboto, sans-serif; letter-spacing: .08px; color: #fff; white-space: nowrap; }
.banner-close { width: 10px; height: 10px; margin-left: auto; margin-right: 16px; }

/* viewport */
.viewport { position: relative; flex: 1; background: #fff; overflow: hidden; }
.scene { position: absolute; left: 0; top: 0; }
.m-side { fill: #dcd8c4; }
.m-side-edge { fill: #dcd8c4; stroke: #333; stroke-width: .8; stroke-dasharray: 2 1; }
.m-rim { fill: #d6ceba; stroke: #6a6555; stroke-width: .8; }
.m-face { fill: #c9bfaa; stroke: #222; stroke-width: .9; }
.m-line { fill: none; stroke: #666; stroke-width: .7; }
.m-detail { fill: #b2a994; stroke: #888; stroke-width: .6; }
.m-holes polygon { fill: #fdf6ec; stroke: #111; stroke-width: 1; }
.m-text { fill: #cbc1ad; stroke: #4a4639; stroke-width: .8; font-family: "Liberation Sans", sans-serif; }
.m-sir { font-size: 66px; }
.m-be { font-size: 31px; }
.m-dot { fill: #b5168a; stroke: #9a9a9a; stroke-width: 1; }
.m-dot-in { fill: #5a0b45; }
.cube-face { fill: #d6d6d6; stroke: #999; stroke-width: .7; }
.cube-inner { fill: #cdcdd0; }
.cube-side { fill: #eee; stroke: #999; stroke-width: .8; stroke-dasharray: 2 1; }
.cube-label { font: bold 13px "Liberation Sans", sans-serif; fill: #868686; text-anchor: middle; dominant-baseline: middle; }
.ax-x { stroke: #ea7b85; stroke-width: 1.500; fill: none; }
.ax-y { stroke: #8be58b; stroke-width: 1.500; fill: none; }
.ax-z { stroke: #8a8af5; stroke-width: 1.500; fill: none; }
.ax-lx, .ax-ly, .ax-lz { font: 15px "Liberation Sans", sans-serif; }
.ax-lx { fill: #f59aa2; }
.ax-ly { fill: #9cf09c; }
.ax-lz { fill: #8a8af5; }

/* panels */
.browser { position: absolute; left: 4px; top: 4px; width: 300px; }
.panel-head, .comments {
  display: flex;
  align-items: center;
  background: #f1f1f1;
  border: 1px solid #ccc;
}
.panel-head { height: 25px; padding-left: 5px; }
.rew { width: 9px; height: 7px; }
.panel-title { margin-left: 10px; font-size: 10px; color: #555; }
.panel-btn { width: 9px; height: 9px; margin-left: auto; }
.panel-grip { width: 3px; height: 10px; margin: 0 2px 0 7px; border-left: 1px solid #888; border-right: 1px solid #ccc; }
.comments { position: absolute; left: 4px; top: 792px; width: 300px; height: 24px; }
.comments-title { margin-left: 24px; }

.tree { margin-top: 5px; display: flex; flex-direction: column; gap: 4px; }
.row { display: flex; align-items: center; height: 20px; padding-left: 36px; }
.row-root { padding-left: 17px; }
.root-tri { width: 11px; height: 12px; margin-right: 8px; }
.arrow { width: 9px; height: 12px; margin-right: 9px; }
.pill {
  height: 20px;
  display: flex;
  align-items: center;
  padding: 0 11px 0 3px;
  background: #f1f1f1;
  font-size: 10.700px;
  color: #444;
}
.pill-root { padding: 0 8px 0 3px; font-size: 11px; }
.ico { width: 16px; height: 16px; }
.ico-2 { margin-left: 9px; }
.gear { color: #9a9a9a; }
.pill-text { margin-left: 14px; white-space: nowrap; }
.root-name {
  width: 134px;
  height: 20px;
  margin-left: 6px;
  display: flex;
  align-items: center;
  background: #999;
  color: #fff;
  font-weight: bold;
  letter-spacing: .5px;
  white-space: nowrap;
}
.root-cube { width: 16px; height: 16px; margin-left: 3px; }
.root-name span { margin-left: 14px; }
.root-radio { width: 13px; height: 13px; margin-left: 4px; }

/* nav bar */
.navbar {
  position: absolute;
  left: 833px;
  top: 793px;
  width: 253px;
  height: 24px;
  display: flex;
  align-items: center;
  padding-left: 3px;
  background: #f1f1f1;
}
.nb { width: 16px; height: 16px; }
.nb-c { margin-left: 5px; }
.ml-2 { margin-left: 2px; }
.ml-5 { margin-left: 5px; }
.ml-7 { margin-left: 7px; }
.ml-9 { margin-left: 9px; }
.ml-11 { margin-left: 11px; }
.ml-14 { margin-left: 14px; }

/* timeline */
.timeline {
  height: 49px;
  flex: none;
  display: flex;
  background: #f1f1f1;
  border-top: 2px solid #ccc;
}
.tl-controls { display: flex; gap: 12px; padding: 17px 0 0 11px; height: 33px; }
.tc { width: 13px; height: 15px; }
.track { position: relative; margin-left: 18px; width: 983px; padding-top: 11px; }
.tl-items { display: flex; }
.tl {
  width: 23.970px;
  height: 28px;
  flex: none;
  display: flex;
  flex-direction: column;
  align-items: center;
  padding-top: 4px;
  position: relative;
}
.tl svg { width: 16px; height: 16px; }
.tl::after { content: ""; width: 2px; height: 5px; margin-top: 3px; background: #ccc; }
.tl-hi::before {
  content: "";
  position: absolute;
  left: 0;
  top: 0;
  width: 24px;
  height: 24px;
  background: #e0e010;
  border-radius: 2px;
}
.tl-hi svg { position: relative; }
.tl-ghost svg { opacity: .3; }
.tl-line { height: 2px; margin: 0 12px; background: #ccc; }
.tl-marker { position: absolute; left: 930px; top: 9px; width: 12px; height: 32px; }
.tl-gear { width: 16px; height: 16px; margin: 15px 13px 0 auto; color: #999; }
```
